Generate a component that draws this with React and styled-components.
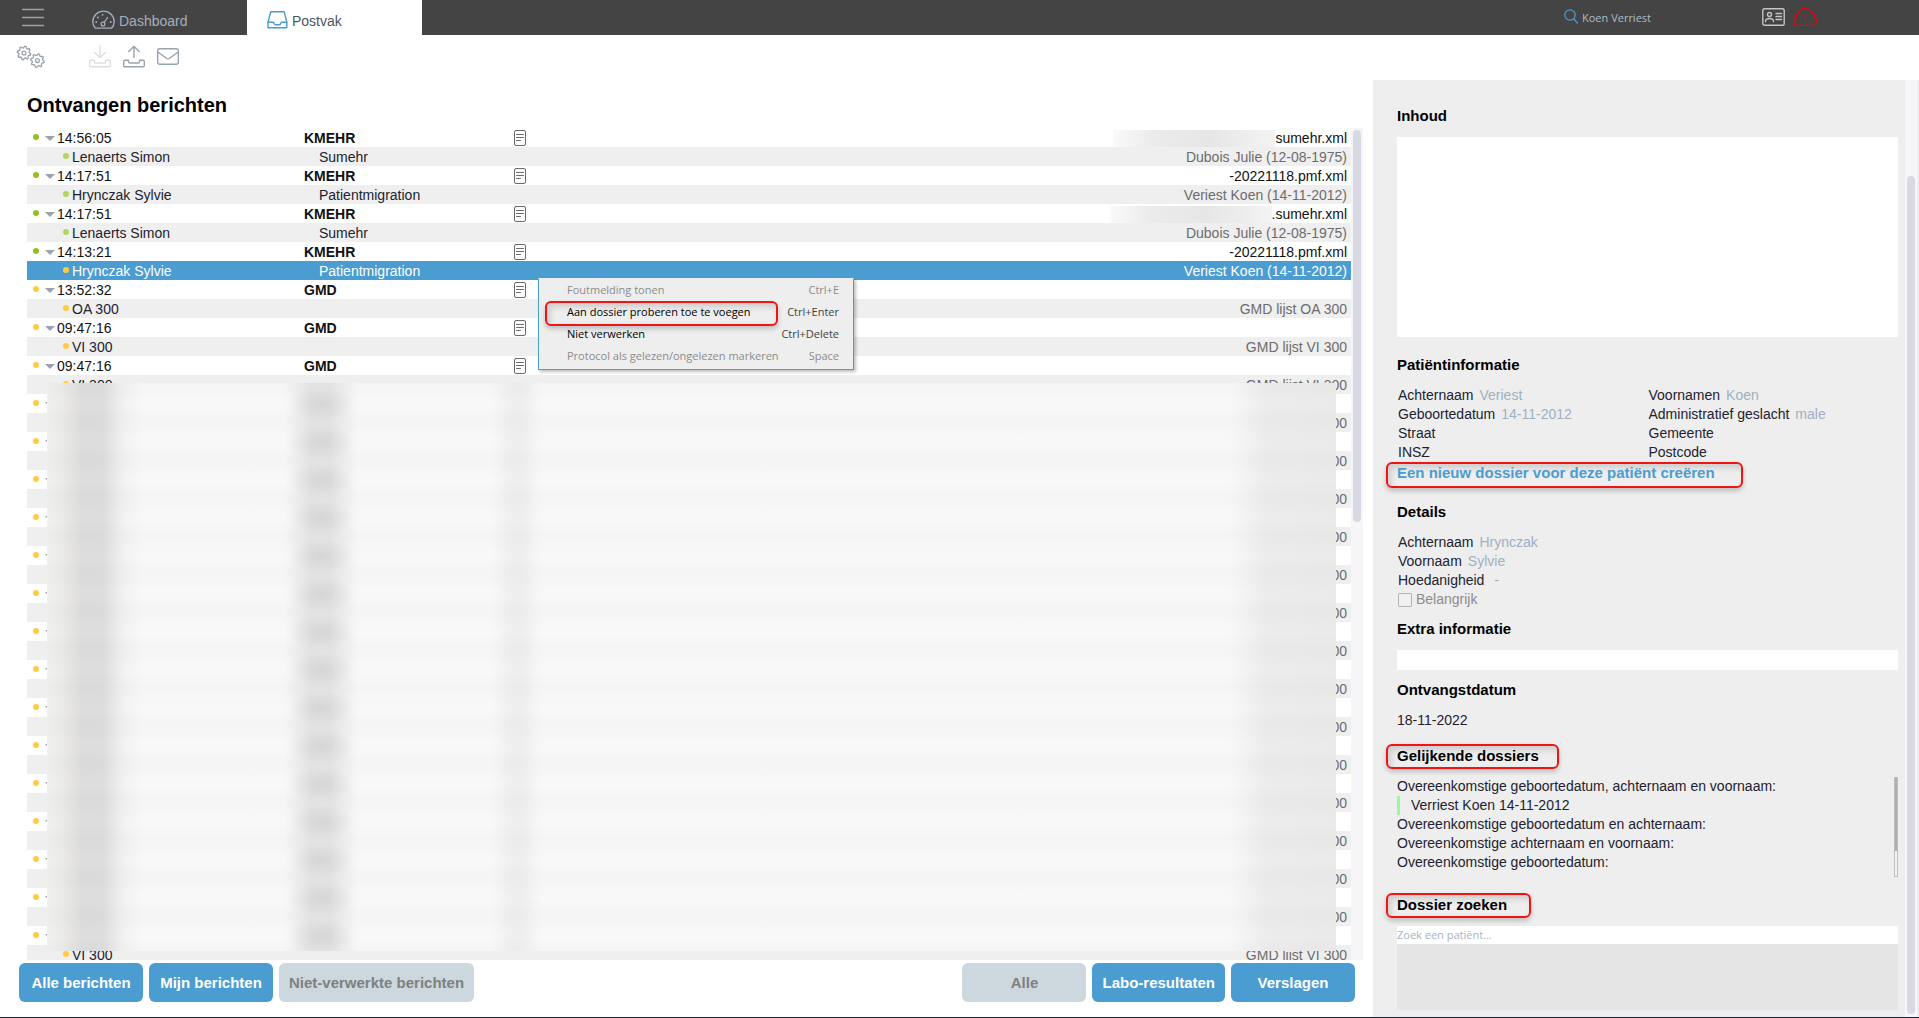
import React from "react";
import styled, { createGlobalStyle, css } from "styled-components";

const GlobalStyle = createGlobalStyle`
  *, *::before, *::after { box-sizing: border-box; }
  body { margin: 0; background: #fff; }
  h1, h2, ul, dl, dd, dt, p { margin: 0; padding: 0; }
  ul { list-style: none; }
  button, input, textarea { font: inherit; }
`;

const arial = `"Liberation Sans", Arial, sans-serif`;
const ui = `"Open Sans", "Noto Sans", sans-serif`;
const blue = "#4b9cd0";

const Page = styled.div`
  display: flex;
  flex-direction: column;
  height: 100vh;
  overflow: hidden;
  border-bottom: 1px solid #1c2433;
  font: 14px/19px ${arial};
  color: #22222e;
`;

/* ---------- top bar ---------- */

const TopBar = styled.header`
  display: flex;
  flex: none;
  height: 35px;
  background: #444;
`;

const IconButton = styled.button`
  display: flex;
  padding: 0;
  border: 0;
  background: none;
  color: ${(p) => p.$color || "#9aa3ad"};
`;

const MenuSlot = styled.div`
  width: 72px;
  padding: 6px 0 0 22px;
`;

const Tab = styled.a`
  display: flex;
  gap: 4px;
  width: 175px;
  padding: 10px 0 0 20px;
  line-height: 22px;
  text-decoration: none;
  color: ${(p) => (p.$active ? "#4c5563" : "#a3afbd")};
  background: ${(p) => (p.$active ? "#fff" : "transparent")};
`;

const Session = styled.div`
  display: flex;
  align-items: flex-start;
  gap: 8px;
  margin-left: auto;
  padding: 7px 101px 0 0;
`;

const CurrentPatient = styled.a`
  display: flex;
  gap: 4px;
  margin-right: 103px;
  font: 11px/21px ${ui};
  color: #a9bccb;
  text-decoration: none;
`;

const Toolbar = styled.div`
  display: flex;
  flex: none;
  gap: 12px;
  height: 45px;
  padding: 10px 16px 8px;
`;

const ToolGap = styled.span`
  width: 20px;
`;

/* ---------- inbox ---------- */

const Body = styled.div`
  display: flex;
  flex: 1;
  min-height: 0;
`;

const Inbox = styled.main`
  display: flex;
  flex: 1;
  flex-direction: column;
  min-width: 0;
  padding-bottom: 15px;
`;

const PageTitle = styled.h1`
  padding: 13px 27px 11px;
  font: bold 20px/24px ${arial};
  color: #000;
`;

const List = styled.div`
  position: relative;
  display: flex;
  flex: 1;
  min-height: 0;
  margin: 0 10px 0 27px;
`;

const Viewport = styled.div`
  flex: 1;
  min-width: 0;
  overflow: hidden;
`;

const Table = styled.table`
  width: 100%;
  table-layout: fixed;
  border-collapse: collapse;
`;

const Row = styled.tr`
  height: 19px;
  background: ${(p) => (p.$child ? "#efefef" : "#fff")};
  color: ${(p) => (p.$child ? "#22222e" : "#111")};
  ${(p) => p.$selected && css`
    background: ${blue};
    color: #fff;
    td:last-child { color: #fff; }
  `}
`;

const Cell = styled.td`
  height: 19px;
  padding: 2px 0 0;
  line-height: 17px;
  white-space: nowrap;
`;

const NameCell = styled(Cell)`
  padding-left: ${(p) => (p.$child ? 36 : 6)}px;
`;

const NameLine = styled.div`
  display: flex;
  align-items: center;
`;

const TypeCell = styled(Cell)`
  padding-left: ${(p) => (p.$child ? 15 : 0)}px;
  font-weight: ${(p) => (p.$child ? "normal" : "bold")};
`;

const SubjectCell = styled(Cell)`
  padding-right: 4px;
  text-align: right;
  color: ${(p) => (p.$child ? "#6c6c6c" : "#111")};
`;

const Dot = styled.i`
  width: 6px;
  height: 6px;
  margin: 0 3px 4px 0;
  border-radius: 50%;
  background: ${(p) => p.$color};
`;

const Caret = styled.i`
  margin: 0 2px 0 3px;
  border: 5px solid transparent;
  border-top-color: #9aa3ae;
  border-bottom: 0;
`;

const Redacted = styled.span`
  display: inline-block;
  width: 162px;
  height: 17px;
  vertical-align: top;
  background: linear-gradient(90deg, #fafafa, #ebebeb 25%, #e6e6e6 60%, #f3f3f3);
`;

/* Soft cover over the private rows: one shaded lane for each column of text. */
const Veil = styled.div`
  position: absolute;
  inset: 255px 27px 9px 20px;
  background:
    radial-gradient(34px 17px at 274px 21px, rgba(0, 0, 0, 0.07), transparent) 0 0 / 100% 38px,
    linear-gradient(90deg,
      rgba(0, 0, 0, 0.03) 0,
      rgba(60, 45, 0, 0.07) 16px,
      rgba(0, 0, 0, 0.11) 34px,
      rgba(0, 0, 0, 0.11) 56px,
      rgba(0, 0, 0, 0.03) 76px,
      transparent 96px,
      transparent 236px,
      rgba(0, 0, 0, 0.08) 264px,
      rgba(0, 0, 0, 0.08) 284px,
      transparent 312px,
      transparent 444px,
      rgba(0, 0, 0, 0.04) 464px,
      rgba(0, 0, 0, 0.04) 476px,
      transparent 496px,
      transparent calc(100% - 108px),
      rgba(0, 0, 0, 0.05) calc(100% - 70px),
      rgba(0, 0, 0, 0.06)),
    repeating-linear-gradient(#f5f5f5 0, #f9f9f9 21px, #f5f5f5 38px);
`;

const Track = styled.div`
  width: 12px;
  flex: none;
  padding: 2px;
  background: #f6f6f9;
`;

const Thumb = styled.div`
  width: 8px;
  height: ${(p) => p.$size};
  margin-top: ${(p) => p.$offset || 0}px;
  border-radius: 4px;
  background: #d9d9e3;
`;

const ButtonBar = styled.div`
  display: flex;
  flex: none;
  gap: 6px;
  padding: 3px 18px 0 19px;
`;

const FilterButton = styled.button`
  min-width: 124px;
  height: 39px;
  padding: 0 10px;
  border: 0;
  border-radius: 6px;
  font-size: 15px;
  font-weight: bold;
  color: #fff;
  background: ${blue};
  &:disabled { color: #808080; background: #ccd7de; }
`;

const Spacer = styled.span`
  flex: 1;
`;

/* ---------- context menu ---------- */

const ContextMenu = styled.ul`
  position: absolute;
  left: 511px;
  top: 150px;
  width: 316px;
  padding: 0 0 2px;
  border: 1px solid ${blue};
  border-top-color: #eee;
  background: #eee;
  box-shadow: 2px 2px 3px rgba(0, 0, 0, 0.25);
  font: 11px/22px ${ui};
`;

const MenuItem = styled.button`
  position: relative;
  display: flex;
  justify-content: space-between;
  width: 100%;
  padding: 0 14px 0 28px;
  border: 0;
  background: none;
  color: #000;
  kbd { font: inherit; color: #444; }
  &:disabled, &:disabled kbd { color: #8c8c8c; }
`;

const Marker = styled.span`
  position: absolute;
  inset: ${(p) => p.$inset};
  border: 2px solid #f01414;
  border-radius: 6px;
  box-shadow: 0 3px 5px rgba(0, 0, 0, 0.2), inset 3px 4px 6px rgba(0, 0, 0, 0.14);
  pointer-events: none;
`;

/* ---------- detail panel ---------- */

const Panel = styled.aside`
  display: flex;
  flex: none;
  width: 546px;
  border-right: 2px solid #eee;
  background: #eee;
`;

const PanelBody = styled.div`
  display: flex;
  flex: 1;
  flex-direction: column;
  padding: 26px 7px 7px 24px;
`;

const Section = styled.section`
  display: flex;
  flex-direction: column;
  margin-bottom: ${(p) => p.$gap}px;
`;

const SectionTitle = styled.h2`
  position: relative;
  align-self: flex-start;
  margin-bottom: 11px;
  font: bold 15px/20px ${arial};
  color: #000;
`;

const TitleText = styled.span`
  position: relative;
  z-index: 1;
`;

const Content = styled.textarea`
  display: block;
  width: 100%;
  height: ${(p) => p.$height}px;
  padding: 0;
  border: 0;
  resize: none;
  background: #fff;
`;

const Fields = styled.dl`
  display: grid;
  grid-template-columns: repeat(${(p) => p.$columns}, 1fr);
`;

const Field = styled.div`
  display: flex;
  gap: 6px;
  height: 19px;
  padding-left: 1px;
  dd { color: #9fb0c2; }
`;

const CreateLink = styled.a`
  position: relative;
  align-self: flex-start;
  margin-top: 1px;
  font-size: 15px;
  font-weight: bold;
  color: ${blue};
  text-decoration: none;
`;

const Check = styled.label`
  display: flex;
  align-items: center;
  gap: 4px;
  height: 19px;
  padding-left: 1px;
  color: #8c8c8c;
  input {
    appearance: none;
    width: 14px;
    height: 14px;
    margin: 0;
    border: 1px solid #b4b4b4;
    border-radius: 1px;
    background: #f0f0f0;
  }
`;

const Matches = styled.div`
  display: flex;
  height: 100px;
`;

const MatchList = styled.ul`
  flex: 1;
`;

const Match = styled.li`
  height: 19px;
  ${(p) => p.$hit && css`
    padding-left: 11px;
    border-left: 3px solid #98fb98;
  `}
`;

const MiniTrack = styled.div`
  width: 4px;
  border: 1px solid #bcbcbc;
  background: linear-gradient(#b0b0b0 75%, #f4f4f4 75%);
`;

const Search = styled.input`
  width: 100%;
  height: 18px;
  padding: 0;
  border: 0;
  background: #fff;
  font: 11px/18px ${ui};
  &::placeholder { color: #a3b5c6; opacity: 1; }
`;

const Results = styled.div`
  flex: 1;
  background: #e5e5e5;
`;

/* ---------- icons ---------- */

const Icon = styled.svg`
  display: block;
  fill: none;
  stroke: currentColor;
  stroke-linecap: round;
  stroke-linejoin: round;
`;

function Svg({ w, h, sw = 1.3, children }) {
  return (
    <Icon width={w} height={h} viewBox={`0 0 ${w} ${h}`} strokeWidth={sw} aria-hidden="true">
      {children}
    </Icon>
  );
}

const Burger = () => (
  <Svg w={22} h={22}><path d="M0.5 3.5h21M0.5 11.5h21M0.5 19.5h21" /></Svg>
);
const Gauge = () => (
  <Svg w={23} h={20}>
    <path d="M3.4 18.2C1.7 16.5.8 14.2.8 11.8a10.7 10.7 0 0 1 21.4 0c0 2.4-.9 4.700-2.6 6.400z" />
    <circle cx="11" cy="14" r="1.900" /><path d="M12.300 12.500L15.500 7.500" />
    <path d="M4.200 12h.1M5.800 7.500h.1M10.500 4.800h.1M18.700 12h.1" strokeWidth="1.800" />
  </Svg>
);
const Tray = () => (
  <Svg w={21} h={19} sw={1.4}>
    <path d="M3.800 1.800h13.400l2.600 10.400v5.600H1v-5.600z" />
    <path d="M1 12.200h5.200c.8 0 .7 2.600 2.200 2.600h4c1.500 0 1.400-2.600 2.200-2.600h5.200" />
  </Svg>
);
const gear = (cx, cy) => {
  const pts = [];
  for (let i = 0; i < 32; i++) {
    const r = i % 4 < 2 ? 6.8 : 5.2;
    const a = ((i + 0.5) / 32) * Math.PI * 2;
    pts.push(`${(cx + r * Math.cos(a)).toFixed(1)} ${(cy + r * Math.sin(a)).toFixed(1)}`);
  }
  return `M${pts.join("L")}z`;
};
const Gears = () => (
  <Svg w={29} h={24} sw={1.3}>
    <path d={gear(8, 8)} /><circle cx="8" cy="8" r="1.900" />
    <path d={gear(21.4, 15.6)} /><circle cx="21.400" cy="15.600" r="1.900" />
  </Svg>
);
const Transfer = ({ up }) => (
  <Svg w={22} h={23} sw={1.4}>
    <path d={up ? "M11 12.500V1.500M5.800 6.500L11 1.200l5.200 5.300" : "M11 1v11.500M5.800 7.500l5.200 5.300 5.200-5.300"} />
    <path d="M2 15.200h3.500v1.500c0 .8.5 1.300 1.300 1.300h8.400c.8 0 1.300-.5 1.300-1.300v-1.500H20c.8 0 1.300.5 1.300 1.300v4c0 .8-.5 1.300-1.300 1.300H2c-.8 0-1.300-.5-1.300-1.300v-4c0-.8.5-1.300 1.300-1.300z" />
  </Svg>
);
const Envelope = () => (
  <Svg w={22} h={21} sw={1.4}>
    <rect x=".7" y="3.700" width="20.600" height="15.600" rx="2" /><path d="M1.500 7.500l8.300 6c.8.5 1.600.5 2.400 0l8.300-6" />
  </Svg>
);
const Doc = () => (
  <Svg w={12} h={17} sw={1}>
    <rect x=".5" y=".5" width="11" height="15" rx="1.500" stroke="#6b6b6b" />
    <path d="M2.500 4.500h7M2.500 7.500h7M2.500 10.500h4" stroke="#6b6b6b" />
  </Svg>
);
const Lens = () => (
  <Svg w={14} h={17} sw={1.2}><circle cx="6" cy="8" r="5.200" /><path d="M9.800 12l3.600 4" /></Svg>
);
const IdCard = () => (
  <Svg w={23} h={20} sw={1.4}>
    <rect x=".8" y="1.800" width="21.400" height="16.400" rx="1.800" />
    <circle cx="7.500" cy="7.500" r="2" /><path d="M3.500 14.500c0-4 8-4 8 0M14 6.500h5.500M14 9.500h5.500M14 12.500h5.500" />
  </Svg>
);
const Cloud = () => (
  <Svg w={25} h={20} sw={1.3}>
    <path d="M4.500 18.300C-.2 17.500-.2 11 3.400 10.300 2.800 6.500 5.500 5.500 6.500 5.600 7.200 0 15.500-.2 17.200 4.800c3.400-.4 4.800 2.200 4 4.600 4.300 2.300 3.600 8.200-1 8.900z" />
    <path d="M12.500 7v6.500M12.500 16.200v.1" />
  </Svg>
);

/* ---------- data ---------- */

const green = "#93c01f";
const lime = "#b4d465";
const amber = "#fecb45";

const messages = [
  { time: "14:56:05", type: "KMEHR", file: "sumehr.xml", masked: true, tone: green, dot: lime, name: "Lenaerts Simon", kind: "Sumehr", about: "Dubois Julie (12-08-1975)" },
  { time: "14:17:51", type: "KMEHR", file: "-20221118.pmf.xml", tone: green, dot: lime, name: "Hrynczak Sylvie", kind: "Patientmigration", about: "Veriest Koen (14-11-2012)" },
  { time: "14:17:51", type: "KMEHR", file: ".sumehr.xml", masked: true, tone: green, dot: lime, name: "Lenaerts Simon", kind: "Sumehr", about: "Dubois Julie (12-08-1975)" },
  { time: "14:13:21", type: "KMEHR", file: "-20221118.pmf.xml", tone: green, dot: amber, name: "Hrynczak Sylvie", kind: "Patientmigration", about: "Veriest Koen (14-11-2012)", selected: true },
  { time: "13:52:32", type: "GMD", tone: amber, dot: amber, name: "OA 300", about: "GMD lijst OA 300" },
  ...Array.from({ length: 17 }, () => (
    { time: "09:47:16", type: "GMD", tone: amber, dot: amber, name: "VI 300", about: "GMD lijst VI 300" }
  )),
];

const menu = [
  { label: "Foutmelding tonen", keys: "Ctrl+E", disabled: true },
  { label: "Aan dossier proberen toe te voegen", keys: "Ctrl+Enter", marked: true },
  { label: "Niet verwerken", keys: "Ctrl+Delete" },
  { label: "Protocol als gelezen/ongelezen markeren", keys: "Space", disabled: true },
];

const patient = [
  ["Achternaam", "Veriest"], ["Voornamen", "Koen"],
  ["Geboortedatum", "14-11-2012"], ["Administratief geslacht", "male"],
  ["Straat", ""], ["Gemeente", ""],
  ["INSZ", ""], ["Postcode", ""],
];

const sender = [["Achternaam", "Hrynczak"], ["Voornaam", "Sylvie"], ["Hoedanigheid", "\u00a0-"]];

const matches = [
  { text: "Overeenkomstige geboortedatum, achternaam en voornaam:" },
  { text: "Verriest Koen 14-11-2012", hit: true },
  { text: "Overeenkomstige geboortedatum en achternaam:" },
  { text: "Overeenkomstige achternaam en voornaam:" },
  { text: "Overeenkomstige geboortedatum:" },
];

function Message({ m }) {
  return (
    <>
      <Row>
        <NameCell>
          <NameLine><Dot $color={m.tone} /><Caret />{m.time}</NameLine>
        </NameCell>
        <TypeCell>{m.type}</TypeCell>
        <Cell><Doc /></Cell>
        <SubjectCell>{m.masked && <Redacted />}{m.file}</SubjectCell>
      </Row>
      <Row $child $selected={m.selected}>
        <NameCell $child>
          <NameLine><Dot $color={m.dot} />{m.name}</NameLine>
        </NameCell>
        <TypeCell $child>{m.kind}</TypeCell>
        <Cell />
        <SubjectCell $child>{m.about}</SubjectCell>
      </Row>
    </>
  );
}

function FieldList({ items, columns }) {
  return (
    <Fields $columns={columns}>
      {items.map(([label, value]) => (
        <Field key={label}><dt>{label}</dt><dd>{value}</dd></Field>
      ))}
    </Fields>
  );
}

export default function App() {
  return (
    <Page>
      <GlobalStyle />
      <TopBar>
        <MenuSlot><IconButton aria-label="Menu"><Burger /></IconButton></MenuSlot>
        <Tab href="#dashboard"><Gauge />Dashboard</Tab>
        <Tab href="#postvak" $active><IconButton as="span" $color={blue}><Tray /></IconButton>Postvak</Tab>
        <Session>
          <CurrentPatient href="#patient">
            <IconButton as="span" $color={blue}><Lens /></IconButton>Koen Verriest
          </CurrentPatient>
          <IconButton aria-label="Kaart" $color="#c4c4c4"><IdCard /></IconButton>
          <IconButton aria-label="Verbinding" $color="#e30613"><Cloud /></IconButton>
        </Session>
      </TopBar>
      <Toolbar>
        <IconButton aria-label="Instellingen"><Gears /></IconButton>
        <ToolGap />
        <IconButton aria-label="Ontvangen" $color="#dedede"><Transfer /></IconButton>
        <IconButton aria-label="Verzenden"><Transfer up /></IconButton>
        <IconButton aria-label="Bericht"><Envelope /></IconButton>
      </Toolbar>
      <Body>
        <Inbox>
          <PageTitle>Ontvangen berichten</PageTitle>
          <List>
            <Viewport>
              <Table>
                <colgroup>
                  <col width="277" /><col width="210" /><col width="30" /><col />
                </colgroup>
                <tbody>{messages.map((m, i) => <Message key={i} m={m} />)}</tbody>
              </Table>
            </Viewport>
            <Track><Thumb $size="392px" /></Track>
            <Veil />
            <ContextMenu>
              {menu.map((item) => (
                <li key={item.label}>
                  <MenuItem disabled={item.disabled}>
                    {item.marked && <Marker $inset="0 75px -3px 6px" />}
                    <TitleText>{item.label}</TitleText><kbd>{item.keys}</kbd>
                  </MenuItem>
                </li>
              ))}
            </ContextMenu>
          </List>
          <ButtonBar>
            <FilterButton>Alle berichten</FilterButton>
            <FilterButton>Mijn berichten</FilterButton>
            <FilterButton disabled>Niet-verwerkte berichten</FilterButton>
            <Spacer />
            <FilterButton disabled>Alle</FilterButton>
            <FilterButton>Labo-resultaten</FilterButton>
            <FilterButton>Verslagen</FilterButton>
          </ButtonBar>
        </Inbox>
        <Panel>
          <PanelBody>
            <Section $gap={18}>
              <SectionTitle id="inhoud">Inhoud</SectionTitle>
              <Content aria-labelledby="inhoud" $height={200} readOnly />
            </Section>
            <Section $gap={20}>
              <SectionTitle>Patiëntinformatie</SectionTitle>
              <FieldList items={patient} columns={2} />
              <CreateLink href="#nieuw">
                <Marker $inset="-1px -28px -6px -11px" />
                <TitleText>Een nieuw dossier voor deze patiënt creëren</TitleText>
              </CreateLink>
            </Section>
            <Section $gap={10}>
              <SectionTitle>Details</SectionTitle>
              <FieldList items={sender} columns={1} />
              <Check><input type="checkbox" disabled />Belangrijk</Check>
            </Section>
            <Section $gap={10}>
              <SectionTitle id="extra">Extra informatie</SectionTitle>
              <Content aria-labelledby="extra" $height={20} readOnly />
            </Section>
            <Section $gap={16}>
              <SectionTitle>Ontvangstdatum</SectionTitle>
              <p>18-11-2022</p>
            </Section>
            <Section $gap={18}>
              <SectionTitle>
                <Marker $inset="-2px -20px -3px -11px" />
                <TitleText>Gelijkende dossiers</TitleText>
              </SectionTitle>
              <Matches>
                <MatchList>
                  {matches.map((m) => <Match key={m.text} $hit={m.hit}>{m.text}</Match>)}
                </MatchList>
                <MiniTrack />
              </Matches>
            </Section>
            <SectionTitle id="zoeken">
              <Marker $inset="-2px -24px -3px -11px" />
              <TitleText>Dossier zoeken</TitleText>
            </SectionTitle>
            <Search aria-labelledby="zoeken" placeholder="Zoek een patiënt..." />
            <Results />
          </PanelBody>
          <Track><Thumb $size="calc(100% - 95px)" $offset={94} /></Track>
        </Panel>
      </Body>
    </Page>
  );
}
